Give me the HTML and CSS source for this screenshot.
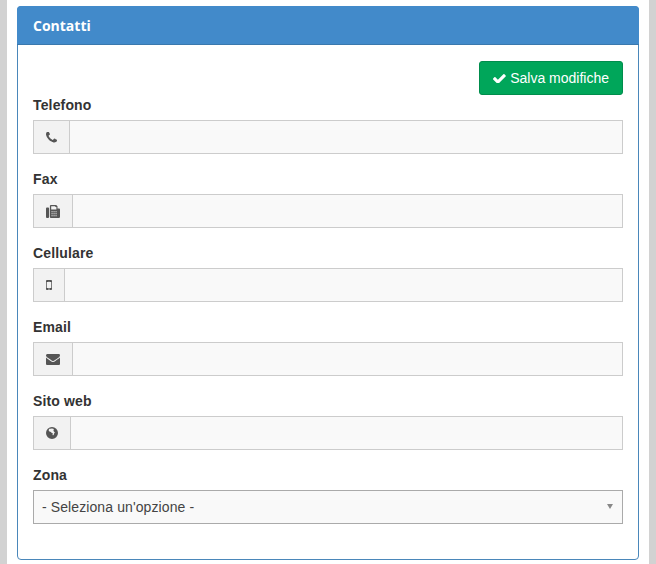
FILE: index.html
```html
<!DOCTYPE html>
<html lang="it">
<head>
    <meta charset="UTF-8">
    <title>Contatti</title>
    <link rel="stylesheet" href="styles.css">
</head>
<body>
    <div class="page">
        <div class="panel">
            <div class="panel-heading">Contatti</div>
            <form class="panel-body">
                <div class="actions">
                    <button type="button" class="btn-save">
                        <svg class="icon-check" viewBox="128 208 1560 1200"><path d="M1671 566q0 40-28 68l-724 724-136 136q-28 28-68 28t-68-28l-136-136-362-362q-28-28-28-68t28-68l136-136q28-28 68-28t68 28l294 295 656-657q28-28 68-28t68 28l136 136q28 28 28 68z"/></svg>
                        Salva modifiche
                    </button>
                </div>

                <div class="form-group">
                    <label>Telefono</label>
                    <div class="input-group">
                        <span class="addon">
                            <svg class="icon-phone" viewBox="192 192 1408 1408"><path d="M1600 1240q0 27-10 70.5t-21 68.5q-21 50-122 106-94 51-186 51-27 0-53-3.5t-57.5-12.5-47-14.5-55.5-20.5-49-18q-98-35-175-83-127-79-264-216t-216-264q-48-77-83-175-3-9-18-49t-20.5-55.5-14.5-47-12.5-57.5-3.5-53q0-92 51-186 56-101 106-122 25-11 68.5-21t70.5-10q14 0 21 3 18 6 53 76 11 19 30 54t35 63.5 31 53.5q3 4 17.5 25t21.5 35.5 7 28.5q0 20-28.5 50t-62 55-62 53-28.5 46q0 9 5 22.5t8.5 20.5 14 24 11.5 19q76 137 174 235t235 174q2 1 19 11.5t24 14 20.5 8.5 22.5 5q18 0 46-28.5t53-62 55-62 50-28.5q14 0 28.5 7t35.5 21.5 25 17.5q25 15 53.5 31t63.5 35 54 30q70 35 76 53 3 7 3 21z"/></svg>
                        </span>
                        <input type="text">
                    </div>
                </div>

                <div class="form-group">
                    <label>Fax</label>
                    <div class="input-group">
                        <span class="addon">
                            <svg class="icon-fax" viewBox="0 0 14 13"><path fill-rule="evenodd" d="M.9 2.600h1.300c.5 0 .9.4.9.9v8.600c0 .5-.4.9-.9.9H.9c-.5 0-.9-.4-.9-.9V3.500c0-.5.4-.9.9-.9zM5.500 0h4.700l1.300 1.300v2.100h1.500c.5 0 1 .4 1 1v7.700c0 .5-.5.900-1 .900H4.800c-.5 0-.9-.4-.900-.9V.9c0-.5.6-.9 1.600-.9zM5.200 1.200v3.400h5.200V2H9.300v-.8zM5.500 6.200v1.100h1.100V6.200zm2 0v1.100h1.100V6.200zm2 0v1.100h1.100V6.200zM5.500 8.200v1.100h1.100V8.200zm2 0v1.100h1.100V8.200zm2 0v1.100h1.100V8.200zM5.500 10.200v1.100h1.100v-1.100zm2 0v1.100h1.100v-1.100zm2 0v1.100h1.100v-1.100z"/></svg>
                        </span>
                        <input type="text">
                    </div>
                </div>

                <div class="form-group">
                    <label>Cellulare</label>
                    <div class="input-group">
                        <span class="addon">
                            <svg class="icon-mobile" viewBox="512 256 768 1280"><path d="M976 1408q0-33-23.500-56.500t-56.500-23.500-56.500 23.500-23.500 56.500 23.500 56.500 56.500 23.500 56.500-23.500 23.500-56.500zm208-160v-704q0-13-9.500-22.500t-22.500-9.500h-512q-13 0-22.500 9.500t-9.500 22.500v704q0 13 9.500 22.500t22.500 9.500h512q13 0 22.500-9.500t9.500-22.500zm-192-848q0-16-16-16h-160q-16 0-16 16t16 16h160q16 0 16-16zm288-16v1024q0 52-38 90t-90 38h-512q-52 0-90-38t-38-90v-1024q0-52 38-90t90-38h512q52 0 90 38t38 90z"/></svg>
                        </span>
                        <input type="text">
                    </div>
                </div>

                <div class="form-group">
                    <label>Email</label>
                    <div class="input-group">
                        <span class="addon">
                            <svg class="icon-envelope" viewBox="0 256 1792 1408"><path d="M1792 710v794q0 66-47 113t-113 47h-1472q-66 0-113-47t-47-113v-794q44 49 101 87 362 246 497 345 57 42 92.500 65.500t94.500 48 110 24.500h2q51 0 110-24.500t94.500-48 92.500-65.500q170-123 498-345 57-39 100-87zm0-294q0 79-49 151t-122 123q-376 261-468 325-10 7-42.500 30.500t-54 38-52 32.500-57.500 27-50 9h-2q-23 0-50-9t-57.500-27-52-32.500-54-38-42.500-30.500q-91-64-262-182.500t-205-142.500q-62-42-117-115.500t-55-136.500q0-78 41.500-130t118.500-52h1472q65 0 112.500 47t47.500 113z"/></svg>
                        </span>
                        <input type="text">
                    </div>
                </div>

                <div class="form-group">
                    <label>Sito web</label>
                    <div class="input-group">
                        <span class="addon">
                            <svg class="icon-globe" viewBox="0 0 12 12"><path fill-rule="evenodd" d="M6 0a6 6 0 1 1 0 12A6 6 0 0 1 6 0zM3.300 1.800 2.600 3.200l.8 1.200 1.500.5.900 1 .9.200-.2 1.400.5.900 1-1.200.2-1.200.8-.8-1-.5-.6-1.300.5-.8-.6-.9-1.400-.3-1.700.4z"/></svg>
                        </span>
                        <input type="text">
                    </div>
                </div>

                <div class="form-group">
                    <label>Zona</label>
                    <div class="select-wrap">
                        <select>
                            <option>- Seleziona un'opzione -</option>
                        </select>
                    </div>
                </div>
            </form>
        </div>
    </div>
</body>
</html>
```

FILE: styles.css
```css
*
{
    box-sizing: border-box;
    margin: 0;
    padding: 0;
}

body
{
    background: #d2d2d2;
    font-family: "Liberation Sans", Arial, sans-serif;
    font-size: 14px;
    line-height: 20px;
    color: #333;
}

.page
{
    min-height: 564px;
    margin: 0 7px;
    padding: 6px 10px 4px;
    background: #fff;
}

.panel
{
    border: 1px solid #4a87ba;
    border-radius: 4px;
    background: #fff;
}

.panel-heading
{
    height: 39px;
    margin: -1px -1px 0;
    padding: 0 16px;
    border-bottom: 1px solid #3a78ad;
    border-radius: 4px 4px 0 0;
    background: #428aca;
    color: #fff;
    font-family: "Open Sans", sans-serif;
    font-size: 14px;
    font-weight: 700;
    line-height: 39px;
}

.panel-body
{
    padding: 16px 15px 20px;
}

.actions
{
    display: flex;
    justify-content: flex-end;
}

.btn-save
{
    display: flex;
    align-items: center;
    gap: 4px;
    height: 34px;
    padding: 0 13px;
    border: 1px solid #008d4c;
    border-radius: 3px;
    background: #00a65a;
    color: #fff;
    font-family: "Liberation Sans", Arial, sans-serif;
    font-size: 14px;
}

.btn-save svg
{
    fill: #fff;
}

.form-group
{
    margin-bottom: 15px;
}

label
{
    display: block;
    margin-bottom: 5px;
    font-weight: 700;
    letter-spacing: .15px;
}

.input-group
{
    display: flex;
    height: 34px;
}

.addon
{
    display: flex;
    flex: none;
    align-items: center;
    padding: 0 12px;
    border: 1px solid #ccc;
    background: #f2f2f2;
}

.addon svg
{
    display: block;
    fill: #555;
}

.input-group input
{
    flex: 1;
    min-width: 0;
    border: 1px solid #ccc;
    border-left: 0;
    background: #f9f9f9;
}

.icon-check { width: 13px; height: 10px; }
.icon-phone { width: 11px; height: 11px; }
.icon-fax { width: 14px; height: 13px; }
.icon-mobile { width: 6px; height: 10px; }
.icon-envelope { width: 14px; height: 11px; }
.icon-globe { width: 12px; height: 12px; }

.select-wrap
{
    position: relative;
}

.select-wrap select
{
    display: block;
    width: 100%;
    height: 34px;
    padding: 0 8px;
    border: 1px solid #aaa;
    border-radius: 0;
    background: #f9f9f9;
    color: #444;
    font-family: "Liberation Sans", Arial, sans-serif;
    font-size: 14px;
    letter-spacing: .1px;
    appearance: none;
}

/* arrow of the select */
.select-wrap::after
{
    content: "";
    position: absolute;
    top: 14px;
    right: 10px;
    border-top: 5px solid #888;
    border-right: 3.5px solid transparent;
    border-left: 3.5px solid transparent;
}
```
